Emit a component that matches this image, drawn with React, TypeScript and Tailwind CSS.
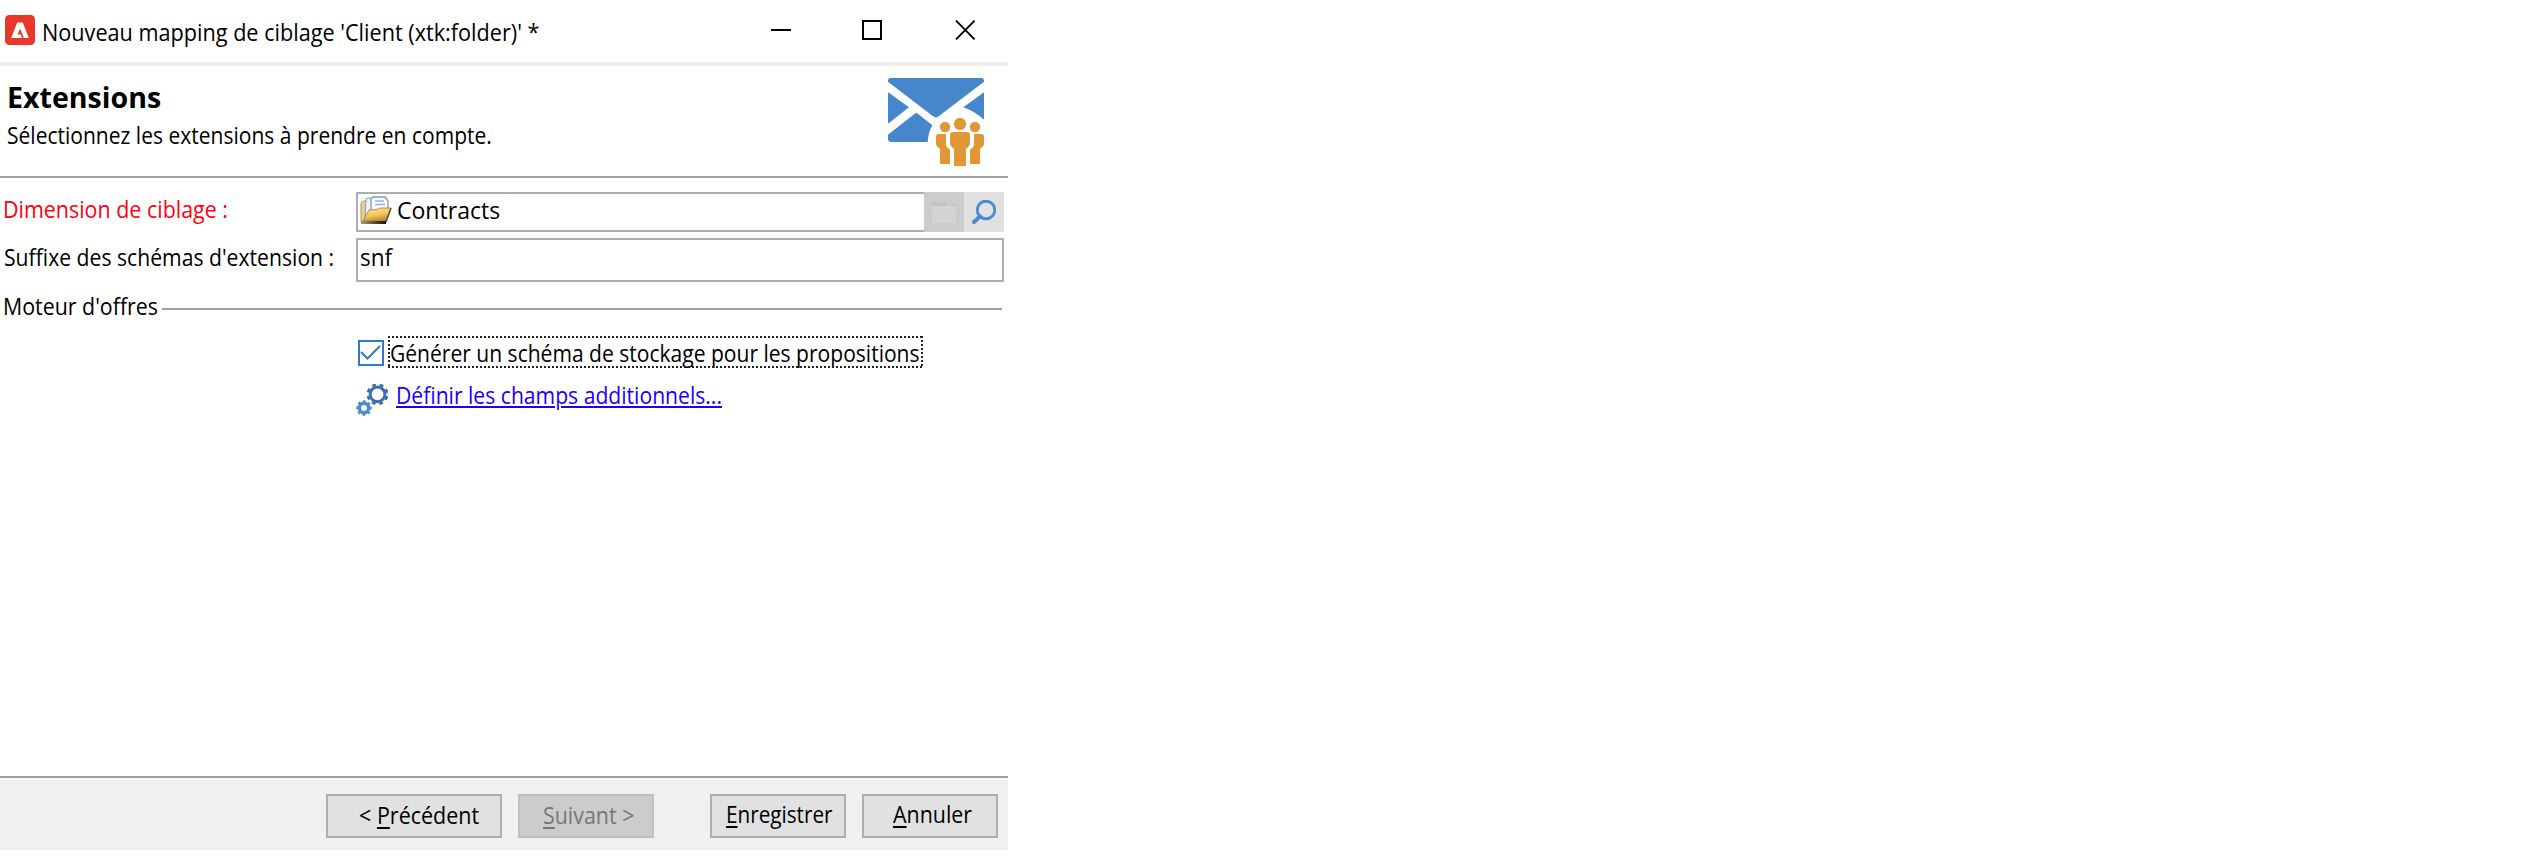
import type { ReactNode } from 'react';
import clsx from 'clsx';

function Label({ className, children }: { className?: string; children: ReactNode }) {
  return (
    <span className={clsx('inline-block origin-left whitespace-nowrap leading-8', className)}>
      {children}
    </span>
  );
}

function Key({ children }: { children: ReactNode }) {
  return <span className="underline decoration-2 underline-offset-[3px]">{children}</span>;
}

function AppLogo() {
  return (
    <svg className="mt-[15px] ml-[5px] h-[30px] w-[30px] shrink-0" viewBox="0 0 30 30">
      <rect width="30" height="30" rx="4.5" fill="#e83829" />
      <path d="M12.2 7.5h5.6l6 15.5h-5l-3.6-9.6-2.6 6h3l1.4 3.6H6.2z" fill="#fff" />
    </svg>
  );
}

function MailingIcon() {
  return (
    <svg className="mt-3 mr-6 h-[88px] w-24 shrink-0" viewBox="0 0 288 264">
      <g fill="#4686cb">
        <path d="M5 0H283L288 5V11L148 118H139L0 11V5Z" />
        <path d="M0 43L63 88L0 137Z" />
        <path d="M288 43L226 88Q260 100 288 125Z" />
        <path d="M82 106H88L133 142Q121 162 119 192H6L0 186V170Z" />
      </g>
      <g fill="#e19736">
        <circle cx="171" cy="147" r="15.5" />
        <circle cx="216" cy="138" r="18.5" />
        <circle cx="261" cy="147" r="15.5" />
        <path d="M152 168H174V198Q174 208 186 215V258H156V212Q144 205 144 197V176Q144 168 152 168Z" />
        <path d="M280 168H258V198Q258 208 246 215V258H276V212Q288 205 288 197V176Q288 168 280 168Z" />
        <path
          d="M195 162H237Q246 162 246 172V194Q246 205 234 212V264H198V212Q186 205 186 194V172Q186 162 195 162Z"
          stroke="#fff"
          strokeWidth="9"
          paintOrder="stroke"
        />
      </g>
    </svg>
  );
}

function OpenFolderIcon() {
  return (
    <svg className="mt-[2px] ml-[2px] h-7 w-8 shrink-0" viewBox="0 0 32 28">
      <defs>
        <linearGradient id="front" x1="0" y1="0" x2="0.4" y2="1">
          <stop offset="0" stopColor="#ffe9a0" />
          <stop offset="0.6" stopColor="#f3c763" />
          <stop offset="1" stopColor="#c98f2e" />
        </linearGradient>
        <linearGradient id="base" x1="0" y1="0" x2="1" y2="0">
          <stop offset="0" stopColor="#a39a78" />
          <stop offset="1" stopColor="#111" />
        </linearGradient>
      </defs>
      <path d="M1 7L3 5H7V26H1Z" fill="#e7cf91" stroke="#a69a73" />
      <path d="M6 3L8 2H12V22L5 25Z" fill="#eef2fa" stroke="#8d9bb5" />
      <path d="M11 3L13 1H25L28 5V15H11Z" fill="#f8faff" stroke="#8796b4" strokeWidth="1.3" />
      <path d="M15 5H24M15 8.5H25" stroke="#8eb0f2" strokeWidth="1.5" />
      <path d="M9 14L17 13.5 20 12H31L26 25H3Z" fill="url(#front)" stroke="#a87b2d" strokeWidth="0.8" />
      <path d="M31 12L26 26" stroke="#5b5033" strokeWidth="1.5" />
      <path d="M1 25H26V28H1Z" fill="url(#base)" />
    </svg>
  );
}

function ClosedFolderIcon() {
  return (
    <svg className="h-6 w-6" viewBox="0 0 24 24">
      <path d="M1 1H14V5H24V7H0V2Z" fill="#c3c3c3" />
      <path d="M2 1H12V2H2Z" fill="#d3d3d3" />
      <path d="M0 6H24V21Q24 23 22 23H2Q0 23 0 21Z" fill="#d4d4d4" />
    </svg>
  );
}

function SearchIcon() {
  return (
    <svg className="h-6 w-6" viewBox="0 0 24 24" fill="none" stroke="#4d8bd0">
      <circle cx="14" cy="10" r="8.8" strokeWidth="2.9" />
      <path d="M8 16.5L2 22" strokeWidth="4" strokeLinecap="square" />
    </svg>
  );
}

function GearsIcon() {
  return (
    <svg className="h-8 w-8 shrink-0" viewBox="0 0 32 32" fill="none">
      <circle cx="21.5" cy="10.3" r="7.4" stroke="#3d70ab" strokeWidth="3" />
      <circle cx="21.5" cy="10.3" r="9.6" stroke="#3d70ab" strokeWidth="2.8" strokeDasharray="3.77 3.77" strokeDashoffset="-1.9" />
      <circle cx="8" cy="24" r="4.7" stroke="#4c8bcf" strokeWidth="3.6" />
      <circle cx="8" cy="24" r="6.8" stroke="#4c8bcf" strokeWidth="2" strokeDasharray="2.67 2.67" strokeDashoffset="1.3" />
    </svg>
  );
}

function FocusRing() {
  return (
    <svg className="absolute inset-0 h-full w-full" viewBox="0 0 535 32" fill="none" stroke="#222" strokeWidth="2" strokeDasharray="2 2">
      <path d="M0 1H535M0 31H535M1 0V32M534 0V32" />
    </svg>
  );
}

export default function App() {
  return (
    <div className="h-[861px] w-full bg-white font-['Open_Sans',sans-serif] text-[23px] text-black">
      <div className="flex h-[850px] w-[1008px] flex-col">
        <header className="flex h-[66px] shrink-0 border-b-4 border-[#f0f0f0]">
          <AppLogo />
          <Label className="mt-4 ml-[7px] scale-x-[0.941]">
            Nouveau mapping de ciblage &apos;Client (xtk:folder)&apos; *
          </Label>
          <svg className="mt-5 mr-8 ml-auto h-5 w-[205px]" viewBox="0 0 205 20" fill="none" stroke="#000" strokeWidth="2">
            <path d="M0 10H20" />
            <rect x="92" y="1" width="18" height="18" />
            <path d="M185 0.7L203.6 19.3M203.6 0.7L185 19.3" strokeWidth="1.9" />
          </svg>
        </header>

        <section className="flex h-28 shrink-0 justify-between border-b-2 border-[#a0a0a0]">
          <div className="flex flex-col items-start">
            <Label className="mt-[13px] ml-[7px] scale-x-[1.02] text-[28px] leading-9 font-bold">Extensions</Label>
            <Label className="mt-1 ml-[7px] scale-x-[0.914]">
              Sélectionnez les extensions à prendre en compte.
            </Label>
          </div>
          <MailingIcon />
        </section>

        <main className="flex flex-1 flex-col">
          <div className="mt-[14px] flex h-10">
            <div className="w-[356px] shrink-0 pl-[3px]">
              <Label className="scale-x-[0.932] text-[#ff0011]">Dimension de ciblage :</Label>
            </div>
            <div className="flex w-[568px] border-2 border-r-0 border-[#adadb4]">
              <OpenFolderIcon />
              <Label className="ml-[5px] scale-x-[0.96] text-2xl leading-8">Contracts</Label>
            </div>
            <div className="flex w-10 items-center justify-center bg-[#cccccc]"><ClosedFolderIcon /></div>
            <div className="flex w-10 items-center justify-center bg-[#e1e1e1]"><SearchIcon /></div>
          </div>
          <div className="mt-[6px] flex h-11">
            <div className="w-[356px] shrink-0 pt-[2px] pl-1">
              <Label className="scale-x-[0.92]">Suffixe des schémas d&apos;extension :</Label>
            </div>
            <div className="w-[648px] border-2 border-[#adadb4] pl-[2px]">
              <Label className="scale-x-[0.94] text-2xl leading-8">snf</Label>
            </div>
          </div>
          <div className="mt-[7px] flex h-8 w-[1002px]">
            <div className="w-[162px] shrink-0 pl-[3px]">
              <Label className="scale-x-[0.929]">Moteur d&apos;offres</Label>
            </div>
            <div className="mt-[19px] h-[2px] flex-1 bg-[#a0a0a0]" />
          </div>
          <div className="mt-[15px] ml-[358px] flex h-8">
            <svg className="mt-1 h-[26px] w-[26px] shrink-0" viewBox="0 0 26 26" fill="none" stroke="#2d78d2" strokeWidth="2">
              <rect x="1" y="1" width="24" height="24" />
              <path d="M3 12L9.5 18.5L22 6" />
            </svg>
            <div className="relative ml-1 h-8 w-[535px] pl-[2px]">
              <Label className="-mt-[1px] scale-x-[0.915]">Générer un schéma de stockage pour les propositions</Label>
              <FocusRing />
            </div>
          </div>
          <div className="mt-4 ml-[356px] flex h-8">
            <GearsIcon />
            <Label className="-mt-[5px] ml-2 scale-x-[0.9185] text-[#1a00ff] underline decoration-2 underline-offset-[2px]">
              Définir les champs additionnels...
            </Label>
          </div>
        </main>

        <footer className="shrink-0 border-t-2 border-[#a0a0a0] pt-[2px]">
          <div className="flex h-[70px] bg-[#f0f0f0] pt-[14px] pl-[326px]">
            <button className="h-11 w-44 border-2 border-[#adadad] bg-[#e1e1e1] pb-[2px] pl-[31px] text-left">
              <Label className="scale-x-[0.935]">&lt; <Key>P</Key>récédent</Label>
            </button>
            <button className="ml-4 h-11 w-[136px] border-2 border-[#bfbfbf] bg-[#cccccc] pb-[2px] pl-[23px] text-left text-[#777]">
              <Label className="scale-x-[0.93]"><Key>S</Key>uivant &gt;</Label>
            </button>
            <button className="ml-14 h-11 w-[136px] border-2 border-[#adadad] bg-[#e1e1e1] pb-1 pl-[14px] text-left">
              <Label className="scale-x-[0.9]"><Key>E</Key>nregistrer</Label>
            </button>
            <button className="ml-4 h-11 w-[136px] border-2 border-[#adadad] bg-[#e1e1e1] pb-[3px] pl-[29px] text-left">
              <Label className="scale-x-[0.93]"><Key>A</Key>nnuler</Label>
            </button>
          </div>
        </footer>
      </div>
    </div>
  );
}
